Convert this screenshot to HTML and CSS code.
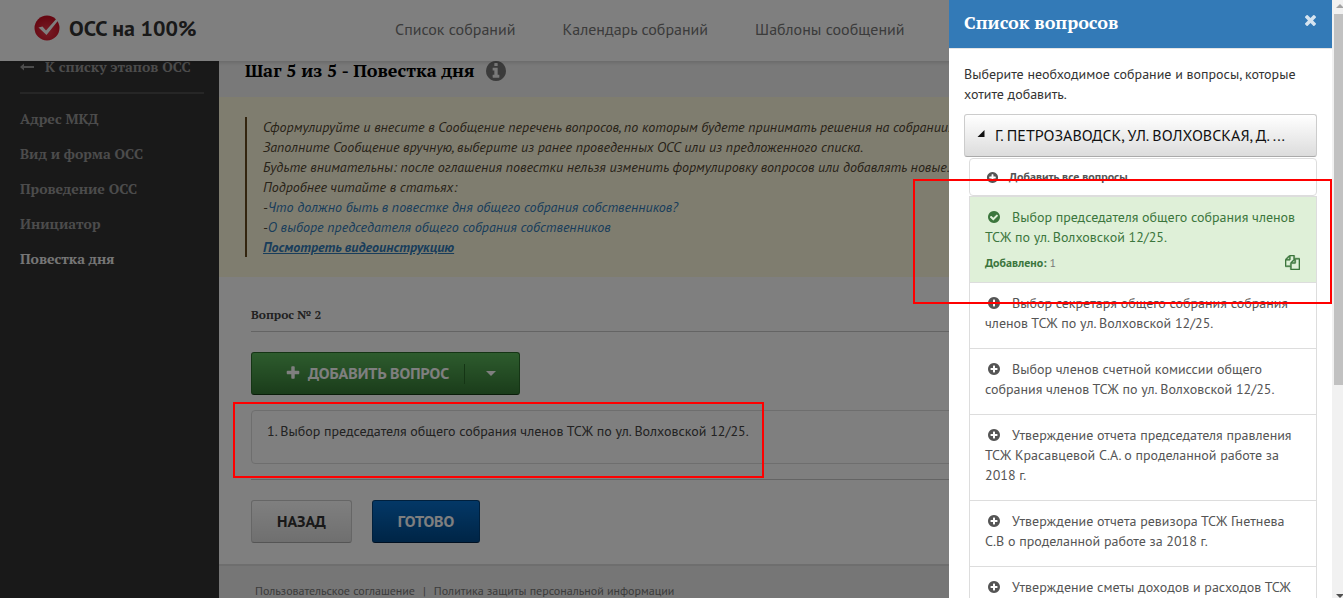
FILE: index.html
```html
<!DOCTYPE html>
<html lang="ru">
<head>
<meta charset="utf-8">
<title>ОСС на 100%</title>
<link rel="stylesheet" href="styles.css">
</head>
<body>
<svg class="sprite" aria-hidden="true">
  <symbol id="plus-circle" viewBox="0 0 1792 1792"><path d="M1344 960v-128q0-26-19-45t-45-19h-256v-256q0-26-19-45t-45-19h-128q-26 0-45 19t-19 45v256h-256q-26 0-45 19t-19 45v128q0 26 19 45t45 19h256v256q0 26 19 45t45 19h128q26 0 45-19t19-45v-256h256q26 0 45-19t19-45zm320-64q0 209-103 385.5t-279.5 279.5-385.5 103-385.5-103-279.5-279.5-103-385.5 103-385.5 279.5-279.5 385.5-103 385.5 103 279.5 279.5 103 385.5z"/></symbol>
  <symbol id="check-circle" viewBox="0 0 1792 1792"><path d="M1412 734q0-28-18-46l-91-90q-19-19-45-19t-45 19l-408 407-226-226q-19-19-45-19t-45 19l-91 90q-18 18-18 46 0 27 18 45l362 362q19 19 45 19 27 0 46-19l543-543q18-18 18-45zm252 162q0 209-103 385.5t-279.5 279.5-385.5 103-385.5-103-279.5-279.5-103-385.5 103-385.5 279.5-279.5 385.5-103 385.5 103 279.5 279.5 103 385.5z"/></symbol>
  <symbol id="info-circle" viewBox="128 128 1536 1536"><path d="M1152 1376v-160q0-14-9-23t-23-9h-96v-512q0-14-9-23t-23-9h-320q-14 0-23 9t-9 23v160q0 14 9 23t23 9h96v320h-96q-14 0-23 9t-9 23v160q0 14 9 23t23 9h448q14 0 23-9t9-23zm-128-896v-160q0-14-9-23t-23-9h-192q-14 0-23 9t-9 23v160q0 14 9 23t23 9h192q14 0 23-9t9-23zm640 416q0 209-103 385.5t-279.5 279.5-385.5 103-385.5-103-279.5-279.5-103-385.5 103-385.5 279.5-279.5 385.5-103 385.5 103 279.5 279.5 103 385.5z"/></symbol>
  <symbol id="plus" viewBox="0 0 1792 1792"><path d="M1600 736v192q0 40-28 68t-68 28h-416v416q0 40-28 68t-68 28h-192q-40 0-68-28t-28-68v-416h-416q-40 0-68-28t-28-68v-192q0-40 28-68t68-28h416v-416q0-40 28-68t68-28h192q40 0 68 28t28 68v416h416q40 0 68 28t28 68z"/></symbol>
  <symbol id="times" viewBox="302 302 1188 1188"><path d="M1490 1322q0 40-28 68l-136 136q-28 28-68 28t-68-28l-294-294-294 294q-28 28-68 28t-68-28l-136-136q-28-28-28-68t28-68l294-294-294-294q-28-28-28-68t28-68l136-136q28-28 68-28t68 28l294 294 294-294q28-28 68-28t68 28l136 136q28 28 28 68t-28 68l-294 294 294 294q28 28 28 68z" transform="translate(0 -64)"/></symbol>
  <symbol id="files" viewBox="0 0 1792 1792"><path stroke="currentColor" stroke-width="60" d="M1696 384q40 0 68 28t28 68v1216q0 40-28 68t-68 28h-960q-40 0-68-28t-28-68v-288h-544q-40 0-68-28t-28-68v-672q0-40 20-88t48-76l408-408q28-28 76-48t88-20h416q40 0 68 28t28 68v328q68-40 128-40h416zm-544 213l-299 299h299v-299zm-640-384l-299 299h299v-299zm196 647l316-316v-416h-384v416q0 40-28 68t-68 28h-416v640h512v-256q0-40 20-88t48-76zm956 804v-1152h-384v416q0 40-28 68t-68 28h-416v640h896z"/></symbol>
</svg>

<div class="page">
  <header class="topbar">
    <a class="logo" href="#">
      <svg class="logo-mark" viewBox="0 0 26 26" aria-hidden="true">
        <defs><radialGradient id="lg" cx=".5" cy=".65" r=".6"><stop offset="0" stop-color="#ee3a4c"/><stop offset="1" stop-color="#cc0d22"/></radialGradient></defs>
        <circle cx="13" cy="13" r="12.5" fill="url(#lg)"/>
        <path d="M4.500 12.500l4-1 3.500 4L23.500 2.500l1.500 2L12.500 20z" fill="#fff"/>
      </svg>
      <span>ОСС на 100%</span>
    </a>
    <nav class="topnav">
      <a href="#">Список собраний</a>
      <a href="#">Календарь собраний</a>
      <a href="#">Шаблоны сообщений</a>
    </nav>
  </header>
  <div class="columns">
    <aside class="sidebar">
      <a class="back" href="#">
        <svg class="arrow" viewBox="0 0 14 8" aria-hidden="true"><path d="M0 4l4-3.500V3h10v2H4v2.500z"/></svg>
        <span>К списку этапов ОСС</span>
      </a>
      <nav class="steps">
        <a href="#">Адрес МКД</a>
        <a href="#">Вид и форма ОСС</a>
        <a href="#">Проведение ОСС</a>
        <a href="#">Инициатор</a>
        <a class="current" href="#">Повестка дня</a>
      </nav>
    </aside>
    <main class="main">
      <div class="heading">
        <h1>Шаг 5 из 5 - Повестка дня</h1>
        <svg class="info"><use href="#info-circle"/></svg>
      </div>
      <section class="note">
        <div class="quote">
          <p>Сформулируйте и внесите в Сообщение перечень вопросов, по которым будете принимать решения на собрании.</p>
          <p>Заполните Сообщение вручную, выберите из ранее проведенных ОСС или из предложенного списка.</p>
          <p>Будьте внимательны: после оглашения повестки нельзя изменить формулировку вопросов или добавлять новые.</p>
          <p>Подробнее читайте в статьях:</p>
          <p>-<a href="#">Что должно быть в повестке дня общего собрания собственников?</a></p>
          <p>-<a href="#">О выборе председателя общего собрания собственников</a></p>
          <p><a class="video" href="#">Посмотреть видеоинструкцию</a></p>
        </div>
      </section>
      <section class="agenda">
        <h2>Вопрос № 2</h2>
        <div class="btn-group">
          <button class="btn add" type="button"><svg class="ic16"><use href="#plus"/></svg>Добавить вопрос</button>
          <button class="btn drop" type="button" aria-label="Ещё"><svg class="caret" viewBox="0 0 10 5"><path d="M0 0h10L5 5z"/></svg></button>
        </div>
        <div class="question">1. Выбор председателя общего собрания членов ТСЖ по ул. Волховской 12/25.</div>
        <div class="actions">
          <button class="btn plain" type="button">Назад</button>
          <button class="btn done" type="button">Готово</button>
        </div>
      </section>
      <footer class="footer">
        <a href="#">Пользовательское соглашение</a>
        <span>|</span>
        <a href="#">Политика защиты персональной информации</a>
      </footer>
    </main>
  </div>
</div>

<div class="backdrop"></div>

<div class="drawer" role="dialog" aria-labelledby="drawer-title">
  <div class="panel">
    <div class="panel-head">
      <h2 id="drawer-title">Список вопросов</h2>
      <button class="close" type="button" aria-label="Закрыть"><svg><use href="#times"/></svg></button>
    </div>
    <div class="panel-body">
      <p class="intro">Выберите необходимое собрание и вопросы, которые хотите добавить.</p>
      <button class="btn meeting" type="button"><svg class="corner" viewBox="0 0 8 8"><path d="M8 0v8H0z"/></svg><span>г. Петрозаводск, ул. Волховская, д. ...</span></button>
      <div class="list">
        <button class="add-all" type="button"><svg class="ic13"><use href="#plus-circle"/></svg>Добавить все вопросы</button>
        <ul>
          <li class="added"><svg class="ic"><use href="#check-circle"/></svg>Выбор председателя общего собрания членов ТСЖ по ул. Волховской 12/25.
            <div class="meta"><span><b>Добавлено:</b> 1</span><button class="copy" type="button" aria-label="Копировать"><svg><use href="#files"/></svg></button></div>
          </li>
          <li><svg class="ic"><use href="#plus-circle"/></svg>Выбор секретаря общего собрания собрания членов ТСЖ по ул. Волховской 12/25.</li>
          <li><svg class="ic"><use href="#plus-circle"/></svg>Выбор членов счетной комиссии общего собрания членов ТСЖ по ул. Волховской 12/25.</li>
          <li><svg class="ic"><use href="#plus-circle"/></svg>Утверждение отчета председателя правления ТСЖ Красавцевой С.А. о проделанной работе за 2018 г.</li>
          <li><svg class="ic"><use href="#plus-circle"/></svg>Утверждение отчета ревизора ТСЖ Гнетнева С.В о проделанной работе за 2018 г.</li>
          <li><svg class="ic"><use href="#plus-circle"/></svg>Утверждение сметы доходов и расходов ТСЖ</li>
        </ul>
      </div>
    </div>
  </div>
  <div class="scroll" aria-hidden="true">
    <svg class="up" viewBox="0 0 7 4"><path d="M0 4L4 0l3 3v1z"/></svg>
    <div class="thumb"></div>
    <svg class="down" viewBox="0 0 7 4"><path d="M0 0h7v1L4 4z"/></svg>
  </div>
</div>

<div class="mark mark-panel"></div>
<div class="mark mark-question"></div>
</body>
</html>
```
FILE: styles.css
```css
* { box-sizing: border-box; }
body {
  margin: 0;
  background: #fff;
  color: #444;
  font: 14px/20px "PT Sans", Roboto, sans-serif;
}
h1, h2, p, ul { margin: 0; padding: 0; }
ul { list-style: none; }
a { color: inherit; text-decoration: none; }
button { font: inherit; color: inherit; cursor: pointer; }
svg { fill: currentColor; }
.sprite { display: none; }

.page { display: flex; flex-direction: column; min-height: 100vh; }

.topbar {
  display: flex;
  align-items: center;
  height: 61px;
  padding: 0 0 4px 34px;
  background: #fff;
  box-shadow: 0 2px 3px rgba(0, 0, 0, .12);
  position: relative;
  z-index: 1;
}
.logo {
  display: flex;
  align-items: center;
  gap: 9px;
  width: 361px;
  padding-bottom: 2px;
  color: #333;
  font-size: 22px;
  font-weight: bold;
}
.logo-mark { width: 26px; height: 26px; }
.topnav { display: flex; gap: 47px; color: #777; font-size: 16px; }

.columns { display: flex; flex: 1; }

.sidebar {
  flex: 0 0 219px;
  padding: 0 15px 0 20px;
  background: #333;
  color: #999;
  font-family: "PT Serif", "Liberation Serif", serif;
  font-size: 14px;
  font-weight: bold;
}
.back {
  display: flex;
  align-items: center;
  gap: 11px;
  line-height: 12px;
  padding-bottom: 19px;
  border-bottom: 2px solid #4d4d4d;
  white-space: nowrap;
}
.arrow { width: 14px; height: 8px; }
.steps { display: flex; flex-direction: column; padding-top: 7px; line-height: 35px; }
.current { color: #ececec; }

.main { flex: 1; display: flex; flex-direction: column; }
.heading {
  display: flex;
  align-items: center;
  gap: 12px;
  padding: 0 26px 16px;
  background: #f2f2f2;
  color: #000;
}
.heading h1 { padding-bottom: 2px; font: bold 18px/18px "PT Serif", "Liberation Serif", serif; }
.info { width: 20px; height: 20px; color: #777; }

.note { padding: 20px 26px; background: #fffadf; }
.quote {
  padding-left: 16px;
  border-left: 2px solid #664a1f;
  color: #514632;
  font-style: italic;
}
.quote a { color: #337ab7; }
.quote .video { font-weight: bold; text-decoration: underline; }

.agenda { padding: 28px 32px 21px; }
.agenda h2 {
  padding-bottom: 6px;
  border-bottom: 1px solid #c8c8c8;
  font: bold 12px/20px "PT Serif", "Liberation Serif", serif;
}

.btn {
  height: 43px;
  border: 1px solid #ccc;
  border-bottom-color: #aaa;
  border-radius: 3px;
  font-size: 16px;
  font-weight: bold;
  text-transform: uppercase;
}
.btn-group {
  display: inline-flex;
  align-items: center;
  margin-top: 20px;
  border: 1px solid #2b6a2b;
  border-bottom-color: #143a14;
  border-radius: 3px;
  background: linear-gradient(#5cb85c, #357935);
  color: #fff;
}
.btn-group .btn { height: 41px; border: 0; background: none; }
.add {
  display: flex;
  align-items: center;
  gap: 7px;
  padding: 0 15px 2px 33px;
}
.ic16 { width: 16px; height: 16px; }
.btn-group .drop { height: 20px; padding: 0 23px 0 21px; border-left: 1px solid #2b6a2b; border-radius: 0; display: flex; align-items: center; }
.caret { width: 10px; height: 5px; }

.question {
  min-height: 54px;
  margin-top: 15px;
  padding: 10px 15px;
  border: 1px solid #ddd;
  border-radius: 4px;
}
.actions {
  display: flex;
  gap: 20px;
  margin-top: 15px;
  padding-top: 20px;
  border-top: 1px solid #c8c8c8;
}
.plain { padding: 0 25px 2px; background: linear-gradient(#fff, #dfdfdf); color: #333; }
.done {
  padding: 0 25px 2px;
  border-color: #00417a;
  border-bottom-color: #002142;
  background: linear-gradient(#0770cd, #004a8c);
  color: #fff;
}

.footer {
  flex: 1;
  display: flex;
  gap: 8px;
  padding: 15px 36px 0;
  border-top: 2px solid #ddd;
  background: #ececec;
  color: #777;
  font-size: 12px;
}

.backdrop { position: fixed; inset: 0; z-index: 2; background: rgba(0, 0, 0, .5); }

.drawer {
  position: fixed;
  top: 0;
  right: 0;
  bottom: 0;
  z-index: 3;
  display: flex;
  width: 394px;
  overflow: hidden;
  background: #fff;
}
.panel { flex: 1; min-width: 0; overflow: hidden; }
.panel-head {
  display: flex;
  align-items: flex-start;
  justify-content: space-between;
  padding: 12px 15px 16px;
  border-bottom: 1px solid #e5e5e5;
  background: #337ab7;
  background-clip: padding-box;
  color: #fff;
}
.panel-head h2 { font: bold 18px/20px "PT Serif", "Liberation Serif", serif; }
.close { display: flex; padding: 3px 1px; border: 0; background: none; opacity: .8; }
.close svg { width: 11px; height: 11px; }
.panel-body { padding: 15px; }
.intro { color: #333; }
.meeting {
  display: flex;
  align-items: center;
  gap: 10px;
  width: 100%;
  margin-top: 10px;
  padding: 0 12px 2px;
  background: linear-gradient(#fff, #dcdcdc);
  color: #111;
  font-weight: normal;
  white-space: nowrap;
}
.corner { flex: none; width: 8px; height: 10px; padding-bottom: 3px; }
.list { padding-left: 5px; color: #555; }
.add-all {
  display: flex;
  align-items: center;
  gap: 10px;
  width: 100%;
  height: 38px;
  margin-top: 1px;
  padding: 0 16px;
  border: 1px solid #ddd;
  border-radius: 4px;
  background: #fff;
  font-size: 12px;
  font-weight: bold;
}
.ic13 { width: 13px; height: 13px; }
.list li { padding: 10px 15px 15px; border: 1px solid #ddd; border-bottom: 0; }
.list .added { padding-bottom: 9px; background: #dff0d8; color: #3c763d; }
.ic { width: 14px; height: 14px; margin: 0 11px 0 2px; vertical-align: -2px; }
.meta {
  display: flex;
  align-items: center;
  justify-content: space-between;
  margin-top: 6px;
  color: #777;
  font-size: 12px;
}
.meta b { color: #3c763d; }
.copy { display: flex; padding: 0 1px 2px; border: 0; background: none; color: #3c763d; }
.copy svg { width: 15px; height: 15px; }

.scroll {
  flex: 0 0 11px;
  display: flex;
  flex-direction: column;
  align-items: flex-end;
  background: #f1f1f1;
}
.up { width: 7px; height: 4px; margin: 4px 0 6px; color: #a3a3a3; }
.thumb { width: 9px; height: 62%; background: #c1c1c1; }
.down { width: 7px; height: 4px; margin-top: auto; color: #505050; }

.mark { position: fixed; z-index: 4; border: 2px solid #f00; pointer-events: none; }
.mark-panel { top: 179px; right: 11px; width: 419px; height: 125px; }
.mark-question { top: 402px; left: 233px; width: 531px; height: 76px; }
```
